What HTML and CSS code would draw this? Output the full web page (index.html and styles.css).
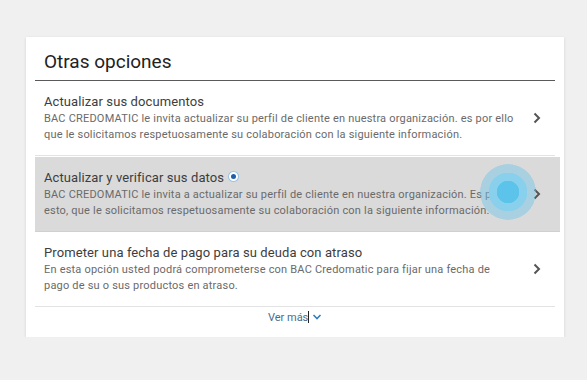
FILE: index.html
```html
<!DOCTYPE html>
<html lang="es">
<head>
    <meta charset="UTF-8">
    <meta name="viewport" content="width=device-width, initial-scale=1.0">
    <title>Otras opciones</title>
    <link rel="stylesheet" href="styles.css">
</head>
<body>
    <div class="wrapper">
        <div class="options-card">
            <h2 class="options-title">Otras opciones</h2>

            <div class="option">
                <div class="details">
                    <div class="name">Actualizar sus documentos</div>
                    <div class="description">BAC CREDOMATIC le invita actualizar su perfil de cliente en nuestra organización. es por ello que le solicitamos respetuosamente su colaboración con la siguiente información.</div>
                </div>
                <svg class="arrow" width="8" height="12" viewBox="0 0 8 12"><polyline points="1.5,1.5 6,6 1.5,10.5" fill="none" stroke="#555" stroke-width="2"/></svg>
            </div>

            <div class="option active">
                <div class="details">
                    <div class="name">Actualizar y verificar sus datos <span class="radio"></span></div>
                    <div class="description">BAC CREDOMATIC le invita a actualizar su perfil de cliente en nuestra organización. Es por esto, que le solicitamos respetuosamente su colaboración con la siguiente información.</div>
                </div>
                <svg class="arrow" width="8" height="12" viewBox="0 0 8 12"><polyline points="1.5,1.5 6,6 1.5,10.5" fill="none" stroke="#555" stroke-width="2"/></svg>
                <div class="ripple"></div>
            </div>

            <div class="option">
                <div class="details">
                    <div class="name">Prometer una fecha de pago para su deuda con atraso</div>
                    <div class="description">En esta opción usted podrá comprometerse con BAC Credomatic para fijar una fecha de pago de su o sus productos en atraso.</div>
                </div>
                <svg class="arrow" width="8" height="12" viewBox="0 0 8 12"><polyline points="1.5,1.5 6,6 1.5,10.5" fill="none" stroke="#555" stroke-width="2"/></svg>
            </div>

            <div class="see-more">
                <a href="#">Ver más</a><span class="caret"></span>
                <svg width="10" height="8" viewBox="0 0 10 8"><polyline points="1.5,2 5,5.5 8.5,2" fill="none" stroke="#2f7fc1" stroke-width="1.6"/></svg>
            </div>
        </div>
    </div>
</body>
</html>
```

FILE: styles.css
```css
body {
    margin: 0;
    padding: 0;
    background-color: #f0f0f0;
}
.wrapper {
    font-family: Roboto, "Liberation Sans", sans-serif;
    padding: 37px 0 0 26px;
}
.options-card {
    width: 538px;
    height: 300px;
    box-sizing: border-box;
    background-color: #fff;
    box-shadow: 0 1px 3px rgba(0,0,0,0.12);
    padding: 0 9px;
}
.options-title {
    margin: 0;
    padding: 14px 9px 7px;
    font-size: 19px;
    line-height: 22px;
    font-weight: 400;
    color: #222;
    border-bottom: 1px solid #5a5a5a;
}
.option {
    position: relative;
    display: flex;
    align-items: center;
    padding: 12px 14px 12px 9px;
    border-bottom: 1px solid #e3e3e3;
}
.option .details {
    flex-grow: 1;
    padding-right: 19.5px;
}
.option .name {
    font-size: 13px;
    line-height: 17px;
    color: #3d3d3d;
    margin-bottom: 1px;
    letter-spacing: 0.1px;
}
.option .description {
    font-size: 11px;
    line-height: 16px;
    color: #6a6a6a;
    letter-spacing: 0.2px;
}
.option.active {
    background-color: #dadada;
    margin-top: 1px;
    margin-right: -5px;
    padding-right: 19px;
    border-bottom: 1px solid #d0d0d0;
}
.option .arrow {
    flex-shrink: 0;
}
.radio {
    display: inline-block;
    width: 5px;
    height: 5px;
    border-radius: 50%;
    background-color: #1f5fa8;
    border: 2px solid #fff;
    box-shadow: 0 0 0 1px #9cc3e6;
    vertical-align: 1px;
    margin-left: 2px;
}
.ripple {
    position: absolute;
    left: 445px;
    top: 7px;
    width: 56px;
    height: 56px;
    border-radius: 50%;
    background: radial-gradient(circle, #5cc3ea 0 11px, #88d0ec 11.5px 19px, rgba(110,196,232,0.45) 19.5px 28px, transparent 28px);
}
.see-more {
    text-align: center;
    padding-top: 3px;
    font-size: 11px;
    line-height: 16px;
}
.see-more a {
    color: #4a6d8c;
    text-decoration: none;
}
.see-more .caret {
    display: inline-block;
    width: 1px;
    height: 12px;
    background-color: #222;
    vertical-align: -2px;
}
.see-more svg {
    vertical-align: 0;
}
```
